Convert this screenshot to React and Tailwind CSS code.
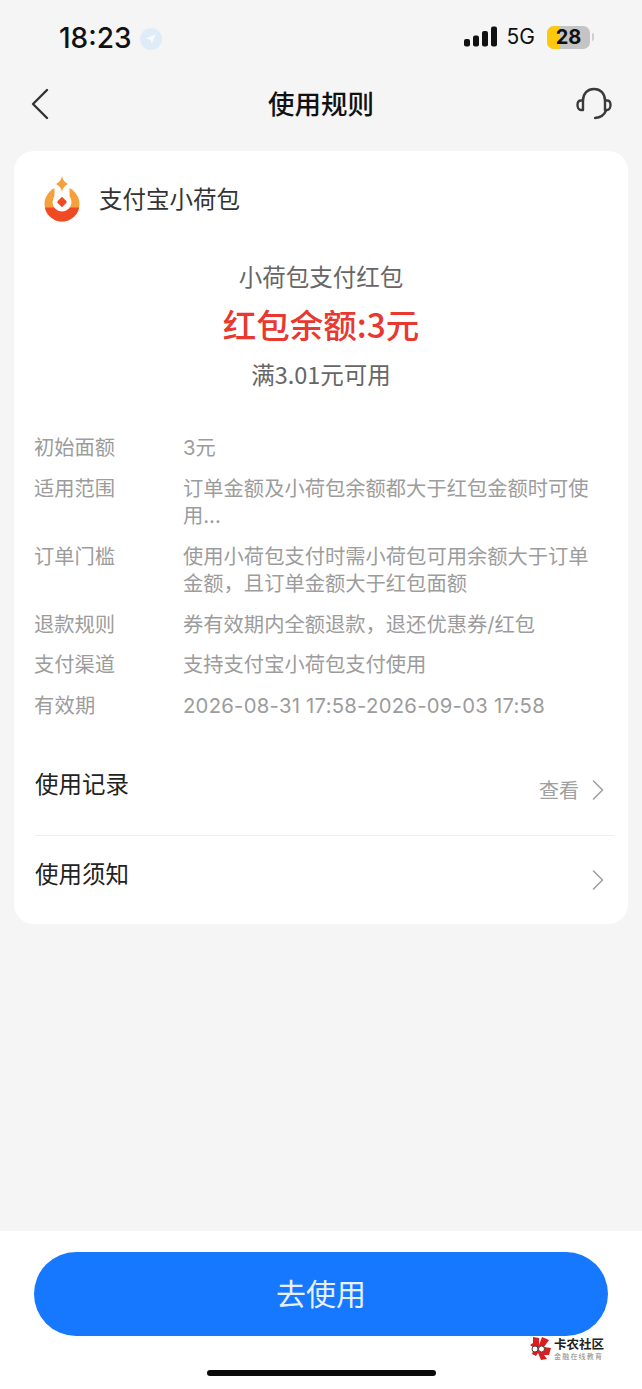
const CJK = { fontFamily: '"Noto Sans CJK SC", "Liberation Sans", sans-serif' };
const ROW = { fontFamily: 'Inter, "Noto Sans CJK SC", "Liberation Sans", sans-serif' };

const rows = [
  ["初始面额", "3元", ""],
  ["适用范围", "订单金额及小荷包余额都大于红包金额时可使用...", ""],
  ["订单门槛", "使用小荷包支付时需小荷包可用余额大于订单金额，且订单金额大于红包面额", ""],
  ["退款规则", "券有效期内全额退款，退还优惠券/红包", ""],
  ["支付渠道", "支持支付宝小荷包支付使用", ""],
  ["有效期", "2026-08-31 17:58-2026-09-03 17:58", "tracking-[0.25px]"],
];

function Chevron() {
  return (
    <svg width="14" height="22" viewBox="0 0 14 22" fill="none" stroke="#a0a0a0" strokeWidth="1.6" strokeLinecap="round" strokeLinejoin="round">
      <path d="M2.500 2l9 9-9 9" />
    </svg>
  );
}

function StatusBar() {
  return (
    <div className="flex h-[76px] items-start justify-between pl-[59px] pr-[48px] pt-[22px]">
      <div className="flex items-center gap-[8px]">
        <span className="text-[28px] leading-[32px] font-medium text-[#111]" style={{ fontFamily: "Inter, sans-serif" }}>18:23</span>
        <svg width="22" height="22" viewBox="0 0 22 22" className="mt-[1px]">
          <circle cx="11" cy="11" r="11" fill="#dfecf8" />
          <path d="M16 6L6 10.600l4.400 1.200L11.600 16z" fill="#f7fafd" />
        </svg>
      </div>
      <div className="flex items-center pt-[3px]">
        <svg width="33" height="22" viewBox="0 0 33 22" fill="#111">
          <rect x="0" y="13" width="6" height="7.500" rx="2" />
          <rect x="9" y="9.500" width="6" height="11" rx="2" />
          <rect x="18" y="5" width="6" height="15.500" rx="2" />
          <rect x="27" y="0.500" width="6" height="20" rx="2" />
        </svg>
        <span className="ml-[10px] text-[21px] leading-[24px] text-[#111]" style={{ fontFamily: "Inter, sans-serif" }}>5G</span>
        <div className="relative ml-[12px] flex h-[23px] w-[43px] items-center justify-center overflow-hidden rounded-[7px] bg-[#c4c4c4]">
          <div className="absolute inset-y-0 left-0 w-[12px] bg-[#fdc90a]" />
          <span className="relative text-[20px] leading-[23px] font-bold text-[#111]" style={{ fontFamily: "Inter, sans-serif" }}>28</span>
        </div>
        <div className="ml-[2px] h-[8px] w-[2px] rounded-r-full bg-[#cfcfcf]" />
      </div>
    </div>
  );
}

function NavBar() {
  return (
    <div className="relative flex h-[56px] items-center justify-between pl-[30px] pr-[30px]">
      <svg width="20" height="32" viewBox="0 0 20 32" fill="none" stroke="#333" strokeWidth="2.400" strokeLinecap="round" strokeLinejoin="round">
        <path d="M17 2L3 16l14 14" />
      </svg>
      <span className="absolute inset-x-0 top-[9px] text-center text-[26.500px] leading-[36px] font-medium text-[#111]">使用规则</span>
      <svg width="36" height="34" viewBox="0 0 36 34" fill="none" stroke="#3a3a3a" strokeWidth="2.400" strokeLinecap="round" strokeLinejoin="round">
        <path d="M7 13.500C7 6.500 11.500 2 18 2s11 4.500 11 11.500" />
        <path d="M7 13.500H5c-2 0-3.500 1.800-3.500 4.500s1.500 5 3.500 5h2z" />
        <path d="M29 13.500h2c2 0 3.500 1.800 3.500 4.500s-1.500 5-3.500 5h-2z" />
        <path d="M30 23.500c-1.500 4-5 7-11 7.500" />
      </svg>
    </div>
  );
}

function Logo() {
  return (
    <svg width="38" height="46" viewBox="0 0 38 46" className="shrink-0">
      <defs>
        <clipPath id="logo-body">
          <circle cx="19" cy="28" r="17.500" />
        </clipPath>
      </defs>
      <circle cx="19" cy="28" r="17.500" fill="#f6a03c" />
      <g clipPath="url(#logo-body)">
        <rect x="0" y="31.500" width="38" height="16" fill="#ef4a24" />
      </g>
      <rect x="11.500" y="8" width="15" height="14" fill="#fff" />
      <circle cx="19" cy="26" r="9.500" fill="#fff" />
      <path d="M19 0c.8 4 2.400 6 6 8-3.600 2-5.200 4-6 8-.8-4-2.400-6-6-8 3.600-2 5.200-4 6-8z" fill="#f6a03c" />
      <path d="M19 20.800l4.300 4.300c.5.500.5 1.300 0 1.800L19 31.200l-4.300-4.300c-.5-.5-.5-1.300 0-1.800z" fill="#ef4a24" />
    </svg>
  );
}

function LinkRow({ label, hint }) {
  return (
    <div className="flex items-start justify-between pr-[9px]">
      <span className="text-[23.500px] leading-[32px] text-[#222]">{label}</span>
      <div className="mt-[9px] flex h-[28px] items-center gap-[12px]">
        {hint && <span className="text-[20px] leading-[28px] text-[#a0a0a0]">{hint}</span>}
        <Chevron />
      </div>
    </div>
  );
}

export default function App() {
  return (
    <div className="relative flex h-[1389px] w-[642px] flex-col overflow-hidden bg-[#f5f5f5]" style={CJK}>
      <StatusBar />
      <NavBar />
      <div className="mx-[14px] mt-[19px] h-[773px] rounded-[20px] bg-white pl-[21px] pr-[14px] pt-[25px]">
        <div className="flex h-[46px] items-center gap-[18px] pl-[8px]">
          <Logo />
          <span className="mt-[-3px] text-[23.500px] leading-[34px] text-[#333]">支付宝小荷包</span>
        </div>
        <div className="mt-[37px] flex flex-col items-center pr-[7px]">
          <span className="text-[23.500px] leading-[34px] text-[#666]">小荷包支付红包</span>
          <span className="mt-[8px] text-[33.500px] leading-[46px] font-medium text-[#e8382f]">红包余额:3元</span>
          <span className="mt-[10px] text-[23.500px] leading-[34px] text-[#666]">满3.01元可用</span>
        </div>
        <div className="ml-[-1px] mt-[43px] flex flex-col gap-[13px]">
          {rows.map(([k, v, t]) => (
            <div key={k} className={`grid grid-cols-[149px_1fr] pr-[22px] text-[20.300px] leading-[27.500px] text-[#9c9c9c] ${t}`} style={ROW}>
              <span>{k}</span>
              <span>{v}</span>
            </div>
          ))}
        </div>
        <div className="mt-[48px] h-[69px] border-b border-[#eeeeee]">
          <LinkRow label="使用记录" hint="查看" />
        </div>
        <div className="pt-[21px]">
          <LinkRow label="使用须知" />
        </div>
      </div>
      <div className="mt-auto flex h-[158px] flex-col bg-white px-[34px] pt-[21px]">
        <div className="flex h-[84px] items-center justify-center rounded-full bg-[#1677ff] pb-[5px] text-[30px] leading-[40px] text-[#e6f0ff]">去使用</div>
        <div className="mx-auto mt-[34px] h-[6px] w-[229px] rounded-full bg-[#0a0a0a]" />
      </div>
      <div className="absolute left-[530px] top-[1336px] flex items-center gap-[3px]">
        <svg width="21" height="24" viewBox="0 0 21 24">
          <path d="M3 1l6 1v7l3-8 7 3-5 7 7 1-2 7h-5l3 4-6 1-3-7-2 3-4-2 2-6-4-3 3-2z" fill="#d81e1e" />
          <circle cx="5" cy="13" r="3" fill="#fff" stroke="#444" strokeWidth="1" />
          <circle cx="11.500" cy="13" r="3" fill="#fff" stroke="#444" strokeWidth="1" />
        </svg>
        <div className="flex flex-col gap-[1px]">
          <span className="text-[12.500px] leading-[14px] font-bold text-[#222]">卡农社区</span>
          <span className="text-[7px] leading-[8px] tracking-[1.200px] text-[#888]">金融在线教育</span>
        </div>
      </div>
    </div>
  );
}
